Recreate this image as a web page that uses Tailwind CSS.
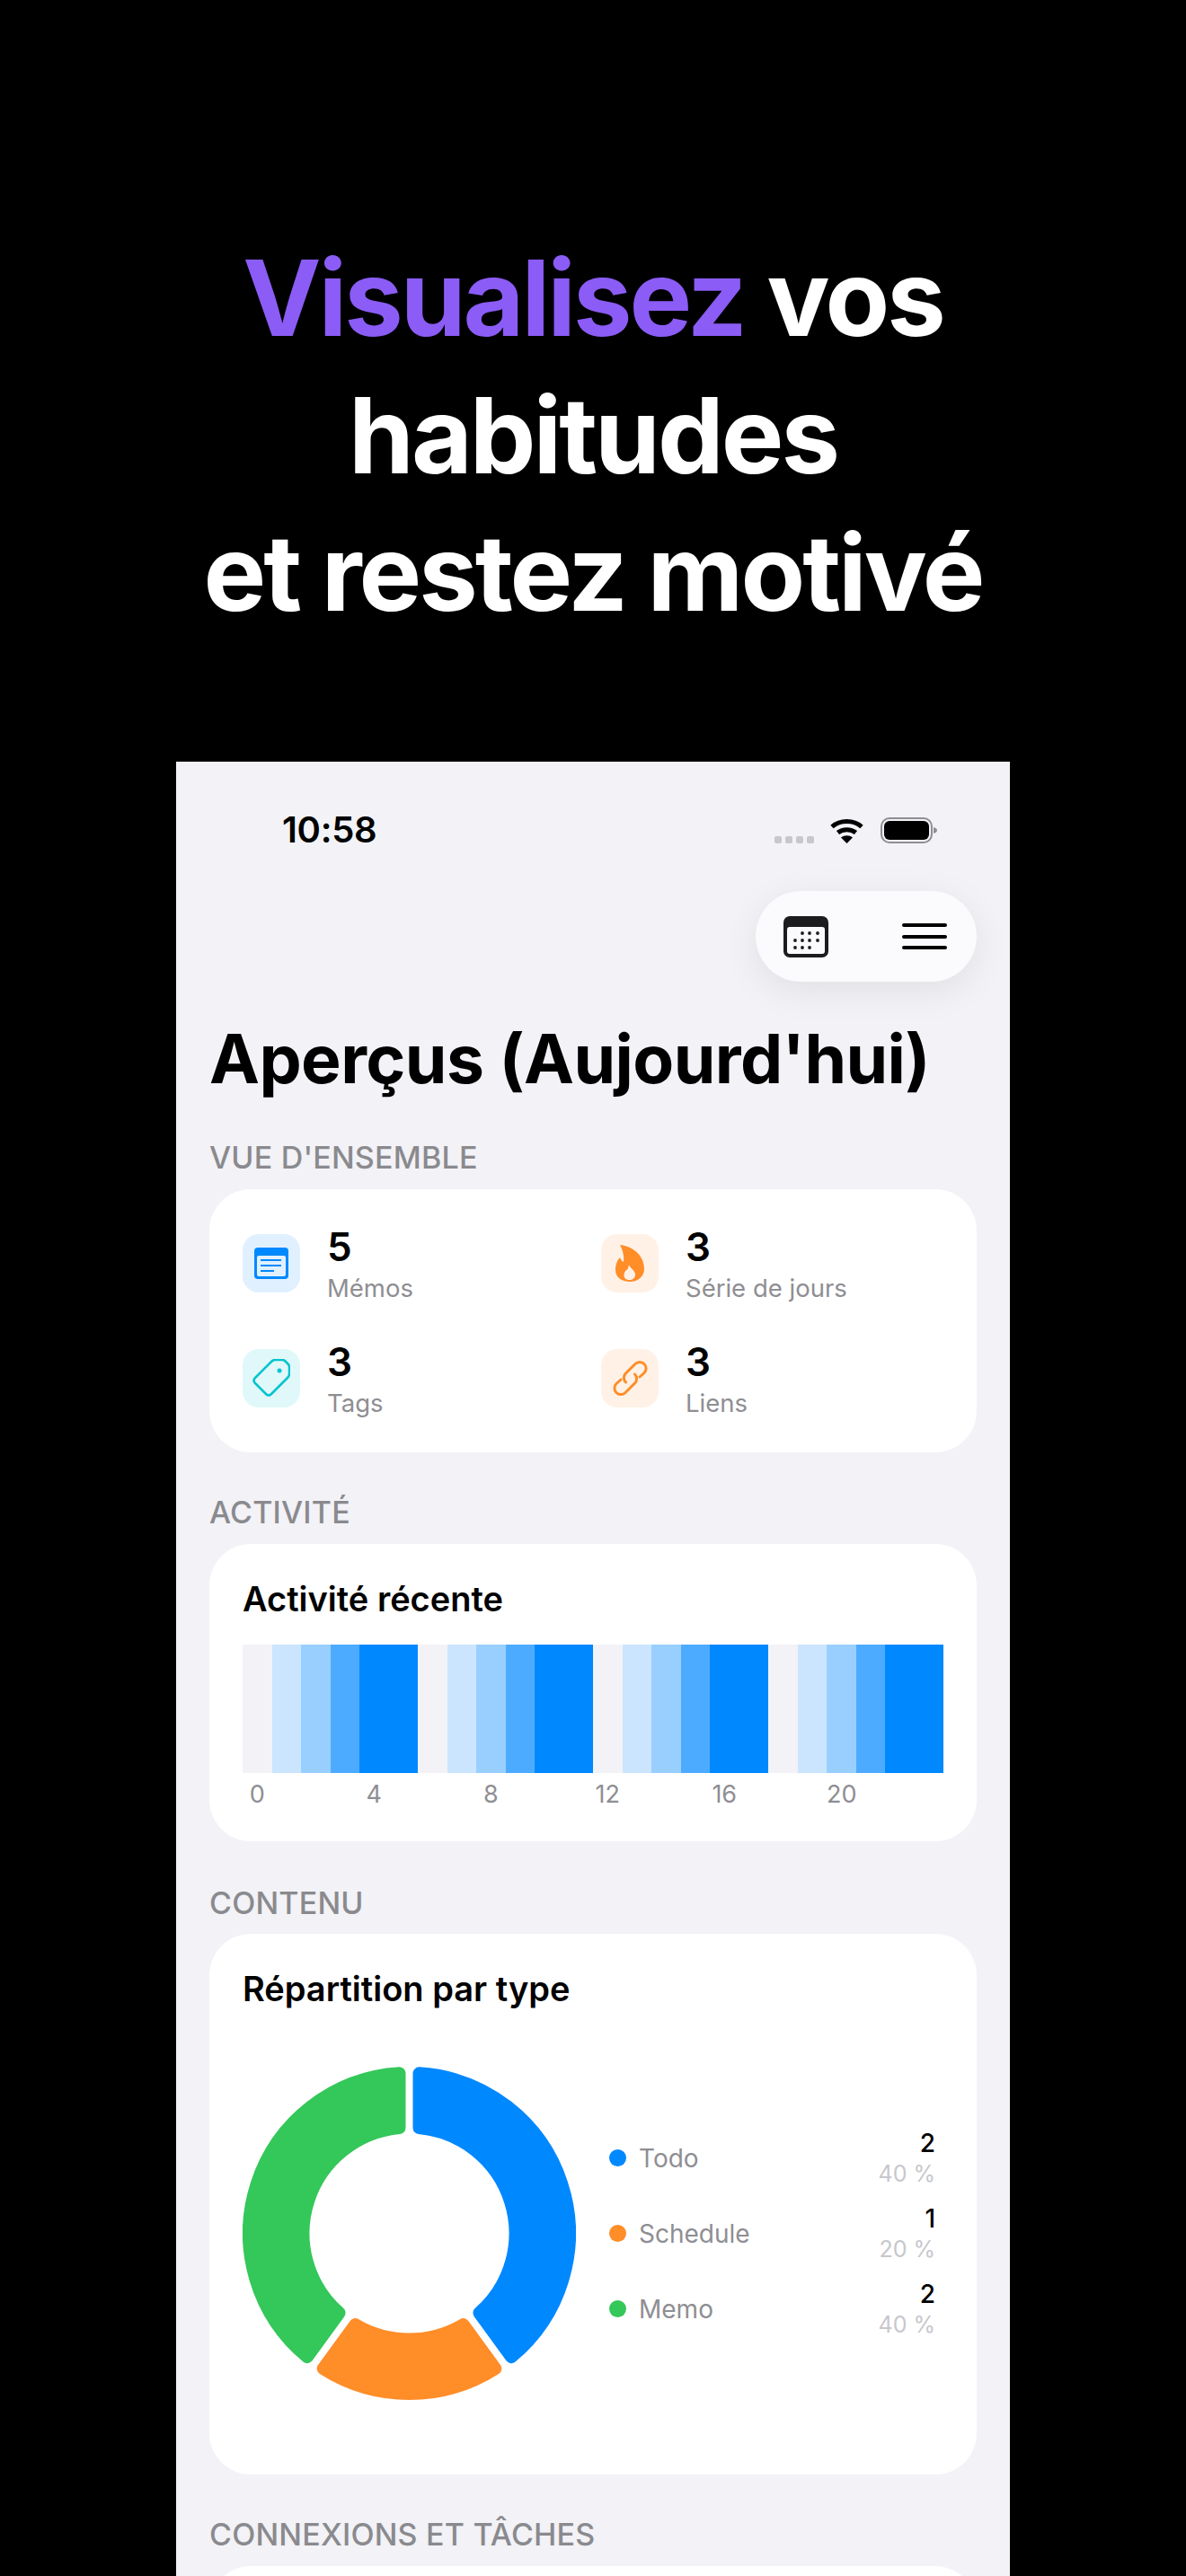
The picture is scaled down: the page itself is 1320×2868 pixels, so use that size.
<!DOCTYPE html>
<html lang="fr">
  <head>
    <meta charset="UTF-8" />
    <meta name="viewport" content="width=device-width, initial-scale=1.0" />
    <script src="https://cdn.jsdelivr.net/npm/@tailwindcss/browser@4"></script>
    <title>Aperçus</title>
  </head>
  <body class="bg-black w-[1320px] h-[2868px] overflow-hidden font-['Inter',sans-serif]">
    <!-- Headline -->
    <h1 class="pt-[255px] text-center text-white font-bold text-[117px] leading-[153px] tracking-[-3px]">
      <span class="text-[#8b5cf6]">Visualisez</span> vos<br />habitudes<br />et restez motivé
    </h1>

    <!-- Phone -->
    <div class="mt-[134px] ml-[196px] w-[928px] h-[2020px] bg-[#f2f2f7] overflow-hidden px-[37px]">
      <!-- Status bar -->
      <div class="h-[144px] pt-[8px] flex items-center justify-between pl-[81px] pr-[44px]">
        <span class="text-[40px] font-semibold text-black tracking-[-0.3px]">10:58</span>
        <div class="flex items-center">
          <div class="flex gap-[4px] mt-[22px] mr-[17px]">
            <span class="w-[8px] h-[8px] rounded-[2px] bg-[#c7c7cc]"></span>
            <span class="w-[8px] h-[8px] rounded-[2px] bg-[#c7c7cc]"></span>
            <span class="w-[8px] h-[8px] rounded-[2px] bg-[#c7c7cc]"></span>
            <span class="w-[8px] h-[8px] rounded-[2px] bg-[#c7c7cc]"></span>
          </div>
          <svg class="mr-[18px]" width="39" height="29" viewBox="0 0 39 29" fill="none">
            <path d="M3 10.5C12 2.5 27 2.5 36 10.5" stroke="#000" stroke-width="5" />
            <path d="M9.5 17C15 12.5 24 12.5 29.5 17" stroke="#000" stroke-width="5" />
            <path d="M13 22.5C17 19.5 22 19.5 26 22.5L19.5 29Z" fill="#000" />
          </svg>
          <svg width="63" height="29" viewBox="0 0 63 29" fill="none">
            <rect x="1" y="1" width="56" height="27" rx="9" stroke="#8e8e93" stroke-width="2" />
            <rect x="4" y="4" width="50" height="21" rx="6" fill="#000" />
            <path d="M59 11C62 12 63 13 63 14.5C63 16 62 17 59 18Z" fill="#8e8e93" />
          </svg>
        </div>
      </div>

      <!-- Toolbar pill -->
      <div class="flex justify-end">
        <div class="w-[246px] h-[101px] rounded-full bg-[#fbfbfd] shadow-[0_10px_40px_rgba(0,0,0,0.08)] flex items-center justify-between pl-[31px] pr-[33px]">
          <svg width="50" height="46" viewBox="0 0 50 46">
            <rect width="50" height="46" rx="7" fill="#1c1c1e" />
            <rect x="4" y="12" width="42" height="30" rx="3" fill="#fbfbfd" />
            <g fill="#1c1c1e">
              <circle cx="21" cy="19" r="1.9" /><circle cx="29" cy="19" r="1.9" /><circle cx="38" cy="19" r="1.9" />
              <circle cx="13" cy="27" r="1.9" /><circle cx="21" cy="27" r="1.9" /><circle cx="29" cy="27" r="1.9" /><circle cx="38" cy="27" r="1.9" />
              <circle cx="13" cy="35" r="1.9" /><circle cx="21" cy="35" r="1.9" /><circle cx="29" cy="35" r="1.9" />
            </g>
          </svg>
          <div class="flex flex-col gap-[8.5px]">
            <span class="block w-[50px] h-[4px] rounded-full bg-black"></span>
            <span class="block w-[50px] h-[4px] rounded-full bg-black"></span>
            <span class="block w-[50px] h-[4px] rounded-full bg-black"></span>
          </div>
        </div>
      </div>

      <h2 class="mt-[41px] text-[75px] leading-[90px] font-bold text-black tracking-[-0.6px]">Aperçus (Aujourd'hui)</h2>

      <!-- Overview -->
      <p class="mt-[45px] text-[34px] leading-[40px] font-medium text-[#8a8a8e] tracking-[0.2px]">VUE D'ENSEMBLE</p>
      <div class="mt-[15px] h-[293px] rounded-[46px] bg-white pl-[37px] pt-[50px] grid grid-cols-[399px_1fr] auto-rows-[128px]">
        <div class="flex gap-[30px] items-start">
          <div class="w-[64px] h-[65px] rounded-[18px] bg-[#e0f0ff] flex items-center justify-center">
            <svg width="38" height="35" viewBox="0 0 38 35">
              <rect width="38" height="35" rx="4" fill="#0088ff" />
              <rect x="3" y="9" width="32" height="23" rx="2" fill="#e0f0ff" />
              <path d="M7 14H30M7 20H30M7 26H22" stroke="#0088ff" stroke-width="2" />
            </svg>
          </div>
          <div>
            <p class="text-[44px] leading-[44px] -mt-[8px] font-semibold text-black">5</p>
            <p class="text-[27.5px] leading-[36px] mt-[6px] text-[#8e8e93]">Mémos</p>
          </div>
        </div>
        <div class="flex gap-[30px] items-start">
          <div class="w-[64px] h-[65px] rounded-[18px] bg-[#fff1e6] flex items-center justify-center">
            <svg width="32" height="41" viewBox="0 0 32 41">
              <path d="M5 0C17 1 32 10 32 27C32 35 25 41 16 41C7 41 0 36 0 28C0 22 2 17 5 14C6 17 7 18 9 19C10 12 8 6 5 0Z" fill="#ff8d28" />
              <path d="M15 22C16 26 22 28 22 33C22 37 19 39 15.5 39C12 39 9.500 37 9.500 34C9.500 31 11 29 12 28C13 28.500 14 27 15 22Z" fill="#fff1e6" />
            </svg>
          </div>
          <div>
            <p class="text-[44px] leading-[44px] -mt-[8px] font-semibold text-black">3</p>
            <p class="text-[27.5px] leading-[36px] mt-[6px] text-[#8e8e93]">Série de jours</p>
          </div>
        </div>
        <div class="flex gap-[30px] items-start">
          <div class="w-[64px] h-[65px] rounded-[18px] bg-[#e0f8f9] flex items-center justify-center">
            <svg width="42" height="43" viewBox="0 0 42 43" fill="none">
              <path d="M3 21L21 3Q23 1 25 1L33 1Q35 1 36.500 2.500L39.500 5.500Q41 7 41 9L41 17Q41 19 39 21L21 39Q18 42 15 39L3 27Q0 24 3 21Z" stroke="#00c3d0" stroke-width="2.500" />
              <circle cx="30" cy="13" r="2.500" fill="#00c3d0" />
            </svg>
          </div>
          <div>
            <p class="text-[44px] leading-[44px] -mt-[8px] font-semibold text-black">3</p>
            <p class="text-[27.5px] leading-[36px] mt-[6px] text-[#8e8e93]">Tags</p>
          </div>
        </div>
        <div class="flex gap-[30px] items-start">
          <div class="w-[64px] h-[65px] rounded-[18px] bg-[#fff1e6] flex items-center justify-center">
            <svg width="41" height="41" viewBox="0 0 41 41" fill="none" stroke="#ff8d28" stroke-width="3" stroke-linecap="round">
              <path d="M31 19L36 14.500A7 7 0 0 0 26 4.500L15 15.500A7 7 0 0 0 15.500 25" />
              <path d="M10 22L5 26.500A7 7 0 0 0 15 36.500L26 25.500A7 7 0 0 0 25.500 16" />
            </svg>
          </div>
          <div>
            <p class="text-[44px] leading-[44px] -mt-[8px] font-semibold text-black">3</p>
            <p class="text-[27.5px] leading-[36px] mt-[6px] text-[#8e8e93]">Liens</p>
          </div>
        </div>
      </div>

      <!-- Activity -->
      <p class="mt-[47px] text-[34px] leading-[40px] font-medium text-[#8a8a8e] tracking-[0.2px]">ACTIVITÉ</p>
      <div class="mt-[15px] h-[331px] rounded-[46px] bg-white px-[37px] pt-[38px]">
        <p class="text-[38px] leading-[46px] font-semibold text-black">Activité récente</p>
        <div class="mt-[28px] h-[143px] w-[780px] flex">
          <div class="flex-1 bg-[#f2f2f7]"></div><div class="flex-1 bg-[#cce5ff]"></div><div class="flex-1 bg-[#99cfff]"></div><div class="flex-1 bg-[#4dabff]"></div><div class="flex-1 bg-[#0088ff]"></div><div class="flex-1 bg-[#0088ff]"></div>
          <div class="flex-1 bg-[#f2f2f7]"></div><div class="flex-1 bg-[#cce5ff]"></div><div class="flex-1 bg-[#99cfff]"></div><div class="flex-1 bg-[#4dabff]"></div><div class="flex-1 bg-[#0088ff]"></div><div class="flex-1 bg-[#0088ff]"></div>
          <div class="flex-1 bg-[#f2f2f7]"></div><div class="flex-1 bg-[#cce5ff]"></div><div class="flex-1 bg-[#99cfff]"></div><div class="flex-1 bg-[#4dabff]"></div><div class="flex-1 bg-[#0088ff]"></div><div class="flex-1 bg-[#0088ff]"></div>
          <div class="flex-1 bg-[#f2f2f7]"></div><div class="flex-1 bg-[#cce5ff]"></div><div class="flex-1 bg-[#99cfff]"></div><div class="flex-1 bg-[#4dabff]"></div><div class="flex-1 bg-[#0088ff]"></div><div class="flex-1 bg-[#0088ff]"></div>
        </div>
        <div class="mt-[8px] w-[780px] flex text-[27px] leading-[32px] text-[#8e8e93]">
          <div class="w-[130px]"><span class="block w-[32.5px] text-center">0</span></div>
          <div class="w-[130px]"><span class="block w-[32.5px] text-center">4</span></div>
          <div class="w-[130px]"><span class="block w-[32.5px] text-center">8</span></div>
          <div class="w-[130px]"><span class="block w-[32.5px] text-center">12</span></div>
          <div class="w-[130px]"><span class="block w-[32.5px] text-center">16</span></div>
          <div class="w-[130px]"><span class="block w-[32.5px] text-center">20</span></div>
        </div>
      </div>

      <!-- Content -->
      <p class="mt-[49px] text-[34px] leading-[40px] font-medium text-[#8a8a8e] tracking-[0.2px]">CONTENU</p>
      <div class="mt-[14px] h-[602px] rounded-[46px] bg-white px-[37px] pt-[38px]">
        <p class="text-[38px] leading-[46px] font-semibold text-black">Répartition par type</p>
        <div class="mt-[64px] flex items-center">
          <svg width="371" height="371" viewBox="-185.5 -185.5 371 371" stroke-width="14" stroke-linejoin="round">
            <path d="M11 -178.16A178.5 178.5 0 0 1 113.62 137.66L77.96 88.58A118 118 0 0 0 11 -117.49Z" fill="#0088ff" stroke="#0088ff" />
            <path d="M95.82 150.6A178.5 178.5 0 0 1 -95.82 150.6L-60.16 101.52A118 118 0 0 0 60.16 101.52Z" fill="#ff8d28" stroke="#ff8d28" />
            <path d="M-113.62 137.66A178.5 178.5 0 0 1 -11 -178.16L-11 -117.49A118 118 0 0 0 -77.96 88.58Z" fill="#34c759" stroke="#34c759" />
          </svg>
          <div class="ml-[37px] w-[363px] flex flex-col gap-[16px]">
            <div class="h-[68px] flex items-center">
              <span class="w-[19px] h-[19px] rounded-full bg-[#0088ff]"></span>
              <span class="ml-[14px] text-[28px] text-[#8e8e93]">Todo</span>
              <div class="ml-auto text-right">
                <p class="text-[28px] leading-[34px] font-medium text-black">2</p>
                <p class="text-[25px] leading-[34px] text-[#c7c7cc]">40 %</p>
              </div>
            </div>
            <div class="h-[68px] flex items-center">
              <span class="w-[19px] h-[19px] rounded-full bg-[#ff8d28]"></span>
              <span class="ml-[14px] text-[28px] text-[#8e8e93]">Schedule</span>
              <div class="ml-auto text-right">
                <p class="text-[28px] leading-[34px] font-medium text-black">1</p>
                <p class="text-[25px] leading-[34px] text-[#c7c7cc]">20 %</p>
              </div>
            </div>
            <div class="h-[68px] flex items-center">
              <span class="w-[19px] h-[19px] rounded-full bg-[#34c759]"></span>
              <span class="ml-[14px] text-[28px] text-[#8e8e93]">Memo</span>
              <div class="ml-auto text-right">
                <p class="text-[28px] leading-[34px] font-medium text-black">2</p>
                <p class="text-[25px] leading-[34px] text-[#c7c7cc]">40 %</p>
              </div>
            </div>
          </div>
        </div>
      </div>

      <!-- Connections -->
      <p class="mt-[47px] text-[34px] leading-[40px] font-medium text-[#8a8a8e] tracking-[0.2px]">CONNEXIONS ET TÂCHES</p>
      <div class="mt-[15px] h-[200px] rounded-[46px] bg-white"></div>
    </div>
  </body>
</html>
